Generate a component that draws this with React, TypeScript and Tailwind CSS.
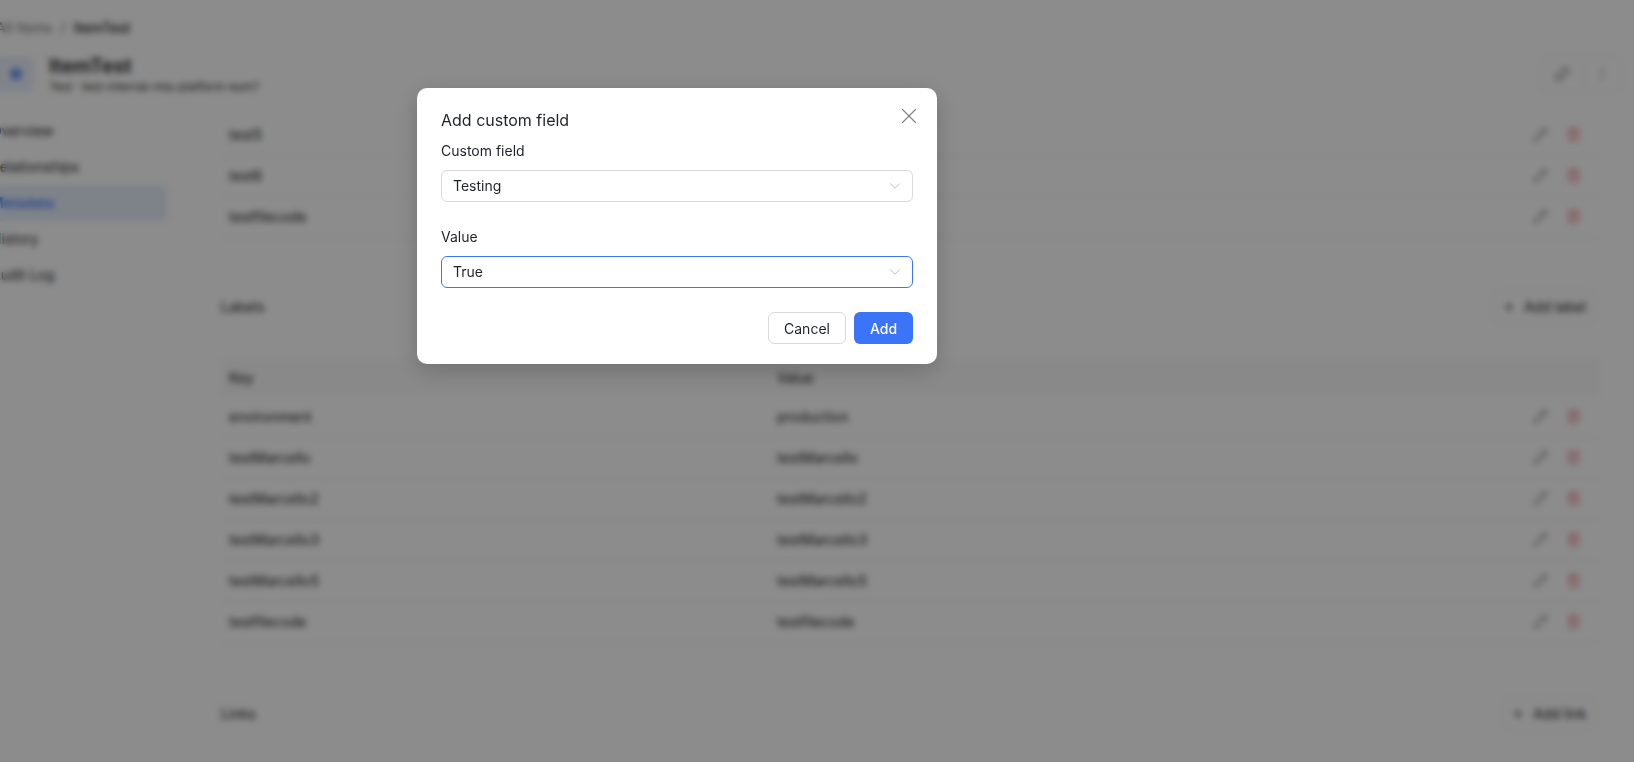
import { ChevronDown, EllipsisVertical, Link2, Pencil, Plus, Trash2, X } from 'lucide-react';

const FONT = "font-['Inter','Noto_Sans',sans-serif]";

const tabs = ['Overview', 'Relationships', 'Metadata', 'History', 'Audit Log'];
const annotations = ['test5', 'test6', 'testfilecode'];
const labels = [
    ['environment', 'production'],
    ['testMarcello', 'testMarcello'],
    ['testMarcello2', 'testMarcello2'],
    ['testMarcello3', 'testMarcello3'],
    ['testMarcello5', 'testMarcello5'],
    ['testfilecode', 'testfilecode'],
];

const RowActions = () => (
    <div className="-mt-[2px] flex items-center gap-[18px] pr-[18px]">
        <Pencil size={15} strokeWidth={1.5} className="text-[#444]" />
        <Trash2 size={15} strokeWidth={1.5} className="text-[#e5484d]" />
    </div>
);

const Row = ({ name, value }: { name: string; value?: string }) => (
    <div className="flex h-[41px] items-center border-b border-[#f6f6f6] pl-2 text-sm text-[#1f2329]">
        <div className="w-[548px]">{name}</div>
        <div className="flex-1">{value}</div>
        <RowActions />
    </div>
);

const SectionHeader = ({ title, action, width }: { title: string; action: string; width: string }) => (
    <div className="flex h-[42px] items-center justify-between pr-[5px] text-sm">
        <span className="text-[#1f2329]">{title}</span>
        <button className={`flex h-8 items-center justify-center gap-2 rounded-md border border-[#f2f2f2] text-[#1f2329] ${width}`}>
            <Plus size={14} />
            {action}
        </button>
    </div>
);

const Select = ({ value, focused }: { value: string; focused?: boolean }) => (
    <div
        className={`flex h-8 items-center justify-between rounded-md border bg-white pl-[11px] pr-2 text-sm text-[#1f2329] ${
            focused ? 'border-[#3b74f6]' : 'border-[#d9d9d9]'
        }`}
    >
        {value}
        <ChevronDown size={18} strokeWidth={1} className="text-[#aaaaaa]" />
    </div>
);

const Page = () => (
    <div className="flex h-full flex-col bg-white">
        {/* Breadcrumb */}
        <div className="flex h-[54px] items-center gap-2 pt-[2px] text-sm text-[#777]">
            <span className="-ml-[4px]">All Items</span>
            <span>/</span>
            <span className="font-medium text-[#1f2329]">ItemTest</span>
        </div>

        {/* Item header */}
        <div className="flex h-[40px] items-center pr-3">
            <div className="-ml-[2px] flex h-9 w-9 items-center justify-center rounded-md bg-[#eaf0fc]">
                <div className="h-3 w-3 rounded-full bg-[#6f97f5]" />
            </div>
            <div className="ml-[15px] flex flex-1 flex-col">
                <span className="text-xl leading-6 font-semibold text-[#1f2329]">ItemTest</span>
                <span className="pt-[1px] text-[11.6px] leading-4 text-[#333]">Test · test-internal-mia-platform-eum?</span>
            </div>
            <button className="flex h-9 w-10 items-center justify-center rounded-md border border-[#f2f2f2]">
                <Link2 size={18} strokeWidth={1.5} className="-rotate-45 text-[#444]" />
            </button>
            <button className="flex h-9 w-10 items-center justify-center rounded-md border border-[#f6f6f6]">
                <EllipsisVertical size={16} className="text-[#999]" />
            </button>
        </div>

        <div className="flex flex-1 pt-[19px]">
            {/* Side tabs */}
            <nav className="flex w-[167px] flex-col text-sm text-[#1f2329]">
                {tabs.map((tab) => (
                    <div
                        key={tab}
                        className={`-ml-[9px] flex h-9 items-center rounded-md ${
                            tab === 'Metadata' ? 'bg-[#e6effc] font-medium text-[#3b74f6]' : ''
                        }`}
                    >
                        {tab}
                    </div>
                ))}
            </nav>

            {/* Metadata content */}
            <main className="ml-[54px] flex-1 pr-[35px] pt-[2px]">
                <div>
                    {annotations.map((name) => (
                        <Row key={name} name={name} />
                    ))}
                </div>
                <div className="mt-[48px]">
                    <SectionHeader title="Labels" action="Add label" width="w-[100px]" />
                </div>
                <div className="mt-[30px]">
                    <div className="flex h-[39px] items-center rounded-t-md bg-[#fafafa] pl-2 text-sm text-[#1f2329]">
                        <div className="w-[548px]">Key</div>
                        <div>Value</div>
                    </div>
                    {labels.map(([name, value]) => (
                        <Row key={name} name={name} value={value} />
                    ))}
                </div>
                <div className="mt-[50px]">
                    <SectionHeader title="Links" action="Add link" width="w-[90px]" />
                </div>
            </main>
        </div>
    </div>
);

export default function App() {
    return (
        <div className={`relative h-[762px] w-[1634px] overflow-hidden ${FONT}`}>
            <Page />

            {/* Modal overlay */}
            <div className="absolute inset-0 bg-black/45 pl-[417px] pt-[88px] backdrop-blur-[3px]">
                <div className="relative h-[276px] w-[520px] rounded-[10px] bg-white px-6 pt-[21px] shadow-[0_6px_24px_rgba(0,0,0,0.2)]">
                    <button className="absolute right-[15px] top-[15px] text-[#808080]">
                        <X size={26} strokeWidth={1} />
                    </button>
                    <h2 className="text-base leading-[22px] text-[#1f2329]">Add custom field</h2>
                    <label className="mt-[9px] block text-sm leading-[22px] text-[#1f2329]">Custom field</label>
                    <div className="mt-2">
                        <Select value="Testing" />
                    </div>
                    <label className="mt-6 block text-sm leading-[22px] text-[#1f2329]">Value</label>
                    <div className="mt-2">
                        <Select value="True" focused />
                    </div>
                    <div className="mt-6 flex justify-end gap-2 text-sm">
                        <button className="h-8 w-[78px] rounded-md border border-[#d9d9d9] bg-white pt-[1px] text-[#1f2329]">Cancel</button>
                        <button className="h-8 w-[59px] rounded-md bg-[#3b74f6] pt-[1px] font-medium text-white">Add</button>
                    </div>
                </div>
            </div>
        </div>
    );
}
